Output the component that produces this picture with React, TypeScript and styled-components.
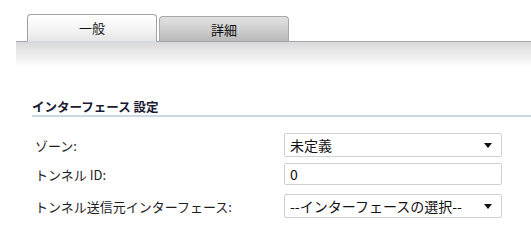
import React from "react";
import styled, { createGlobalStyle } from "styled-components";

const GlobalStyle = createGlobalStyle`
    html, body {
        margin: 0;
        padding: 0;
        background: #ffffff;
    }
    body {
        font-family: "Noto Sans CJK JP", "Liberation Sans", sans-serif;
        color: #1e1e1e;
    }
`;

const Page = styled.div`
    width: 531px;
    height: 241px;
    padding-top: 13px;
    box-sizing: border-box;
    overflow: hidden;
`;

const TabStrip = styled.div`
    display: flex;
    align-items: flex-end;
    gap: 2px;
    margin-left: 16px;
    padding-left: 11px;
    height: 28px;
    border-bottom: 1px solid #a4a4ac;
`;

const Tab = styled.div<{ $active?: boolean }>`
    width: 130px;
    height: ${(p) => (p.$active ? "28px" : "25px")};
    box-sizing: border-box;
    display: flex;
    align-items: center;
    justify-content: center;
    font-size: 13px;
    color: #111;
    border: 1px solid ${(p) => (p.$active ? "#a2a2a2" : "#a8a8a8")};
    border-bottom: ${(p) => (p.$active ? "1px solid #d4d8ee" : "none")};
    border-radius: 4px 4px 0 0;
    background: ${(p) =>
        p.$active
            ? "linear-gradient(to bottom, #ffffff 0%, #f6f6f6 50%, #e6e6e6 100%)"
            : "linear-gradient(to bottom, #e2e2e2 0%, #cfcfcf 50%, #b9b9b9 100%)"};
    margin-bottom: ${(p) => (p.$active ? "-1px" : "0")};
    padding-bottom: ${(p) => (p.$active ? "1px" : "0")};
`;

const Band = styled.div`
    margin-left: 16px;
    height: 25px;
    background: linear-gradient(to bottom, #d9d9d9 0%, #ececec 50%, #ffffff 100%);
`;

const Section = styled.div`
    padding: 33px 0 0 32px;
`;

const Heading = styled.div`
    font-size: 12.5px;
    font-weight: bold;
    color: #1a1a33;
    line-height: 14px;
    padding-bottom: 1px;
    border-bottom: 2px solid #cbd9e2;
`;

const Form = styled.div`
    margin-top: 16px;
`;

const Row = styled.div<{ $gap: number }>`
    display: grid;
    grid-template-columns: 252px 218px;
    align-items: center;
    margin-top: ${(p) => p.$gap}px;
`;

const Label = styled.div`
    padding-left: 3px;
    font-size: 13px;
    color: #1e1e1e;
`;

const Field = styled.div<{ $tall?: boolean }>`
    height: ${(p) => (p.$tall ? "24px" : "22px")};
    box-sizing: border-box;
    border: 1px solid #cfcfd4;
    border-radius: 2px;
    display: flex;
    align-items: center;
    justify-content: space-between;
    padding: 0 9px 0 5px;
    font-size: 14px;
    color: #111;
    background: #fff;
`;

const Caret = styled.span`
    width: 0;
    height: 0;
    border-left: 4px solid transparent;
    border-right: 4px solid transparent;
    border-top: 5px solid #111;
`;

export default function App() {
    return (
        <Page>
            <GlobalStyle />
            <TabStrip>
                <Tab $active>一般</Tab>
                <Tab>詳細</Tab>
            </TabStrip>
            <Band />
            <Section>
                <Heading>インターフェース 設定</Heading>
                <Form>
                    <Row $gap={0}>
                        <Label>ゾーン:</Label>
                        <Field $tall>
                            <span>未定義</span>
                            <Caret />
                        </Field>
                    </Row>
                    <Row $gap={6}>
                        <Label>トンネル ID:</Label>
                        <Field>
                            <span>0</span>
                        </Field>
                    </Row>
                    <Row $gap={9}>
                        <Label>トンネル送信元インターフェース:</Label>
                        <Field $tall>
                            <span>--インターフェースの選択--</span>
                            <Caret />
                        </Field>
                    </Row>
                </Form>
            </Section>
        </Page>
    );
}
